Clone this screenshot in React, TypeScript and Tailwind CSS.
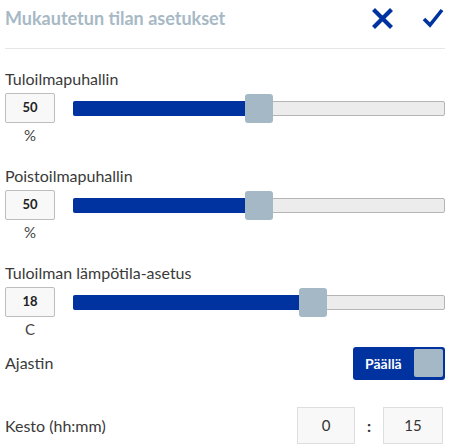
import React from 'react';

const font = { fontFamily: '"Source Sans Pro", Lato, "Open Sans", sans-serif' };

function Slider({ pos }: { pos: number }) {
  // pos = thumb offset as a fraction of the free track
  const left = `calc(${pos} * (100% - 28px))`;
  return (
    <div className="relative flex-1 h-[15px] rounded-[2px] border border-[#b5b5b5] bg-[#ececec]">
      <div className="absolute left-[-1px] top-[-1px] bottom-[-1px] rounded-l-[2px] bg-[#0033a0]" style={{ width: `calc(${left} + 6px)` }} />
      <div className="absolute top-[-8px] w-[28px] h-[29px] rounded-[3px] bg-[#a4b8c5]" style={{ left }} />
    </div>
  );
}

function SliderRow({ label, value, unit, pos }: { label: string; value: string; unit: string; pos: number }) {
  return (
    <div className="pt-[20px] h-[97px]">
      <div className="text-[16px] leading-[20px] text-[#3a3a3a]">{label}</div>
      <div className="flex items-center mt-[4px]">
        <div className="w-[50px] h-[30px] flex items-center justify-center border border-[#bdbdbd] rounded-[2px] bg-[#f8f8f8] text-[13px] font-bold text-[#222]">
          {value}
        </div>
        <div className="flex-1 flex items-center pl-[18px]">
          <Slider pos={pos} />
        </div>
      </div>
      <div className="w-[50px] text-center text-[15px] leading-[18px] mt-[3px] text-[#444]">{unit}</div>
    </div>
  );
}

export default function App() {
  return (
    <div className="w-[454px] h-[448px] bg-white pl-[5px] pr-[9px] overflow-hidden" style={font}>
      <div className="flex items-center justify-between h-[49px] border-b border-[#e6e6e6]">
        <div className="text-[18px] font-bold text-[#a7b9c5] -mt-[11px]">Mukautetun tilan asetukset</div>
        <div className="flex items-center gap-[29px] -mt-[11px] pr-[1px]">
          <svg width="21" height="21" viewBox="0 0 21 21">
            <path d="M3 3 L18 18 M18 3 L3 18" stroke="#0033a0" strokeWidth="4.2" strokeLinecap="square" fill="none" />
          </svg>
          <svg width="22" height="21" viewBox="0 0 22 21">
            <path d="M2 11 L8 17 L20 2" stroke="#0033a0" strokeWidth="3.6" strokeLinejoin="miter" fill="none" />
          </svg>
        </div>
      </div>
      <SliderRow label="Tuloilmapuhallin" value="50" unit="%" pos={0.5} />
      <SliderRow label="Poistoilmapuhallin" value="50" unit="%" pos={0.5} />
      <SliderRow label="Tuloilman lämpötila-asetus" value="18" unit="C" pos={0.657} />
      <div className="flex items-center justify-between h-[44px] mt-[1px]">
        <div className="text-[16px] text-[#3a3a3a]">Ajastin</div>
        <div className="flex items-center w-[92px] h-[33px] rounded-[3px] bg-[#0033a0] pl-[12px] pr-[2px]">
          <span className="flex-1 text-[14px] font-bold text-white">Päällä</span>
          <span className="w-[29px] h-[28px] rounded-[2px] bg-[#a4b8c5]" />
        </div>
      </div>
      <div className="flex items-center justify-between mt-[22px]">
        <div className="text-[16px] text-[#3a3a3a]">Kesto (hh:mm)</div>
        <div className="flex items-center pr-[2px]">
          <div className="w-[58px] h-[37px] flex items-center justify-center border border-[#dedede] bg-[#f8f8f8] text-[15px] text-[#333]">0</div>
          <div className="w-[28px] text-center text-[16px] font-bold text-[#333]">:</div>
          <div className="w-[60px] h-[37px] flex items-center justify-center border border-[#dedede] bg-[#f8f8f8] text-[15px] text-[#333]">15</div>
        </div>
      </div>
    </div>
  );
}
